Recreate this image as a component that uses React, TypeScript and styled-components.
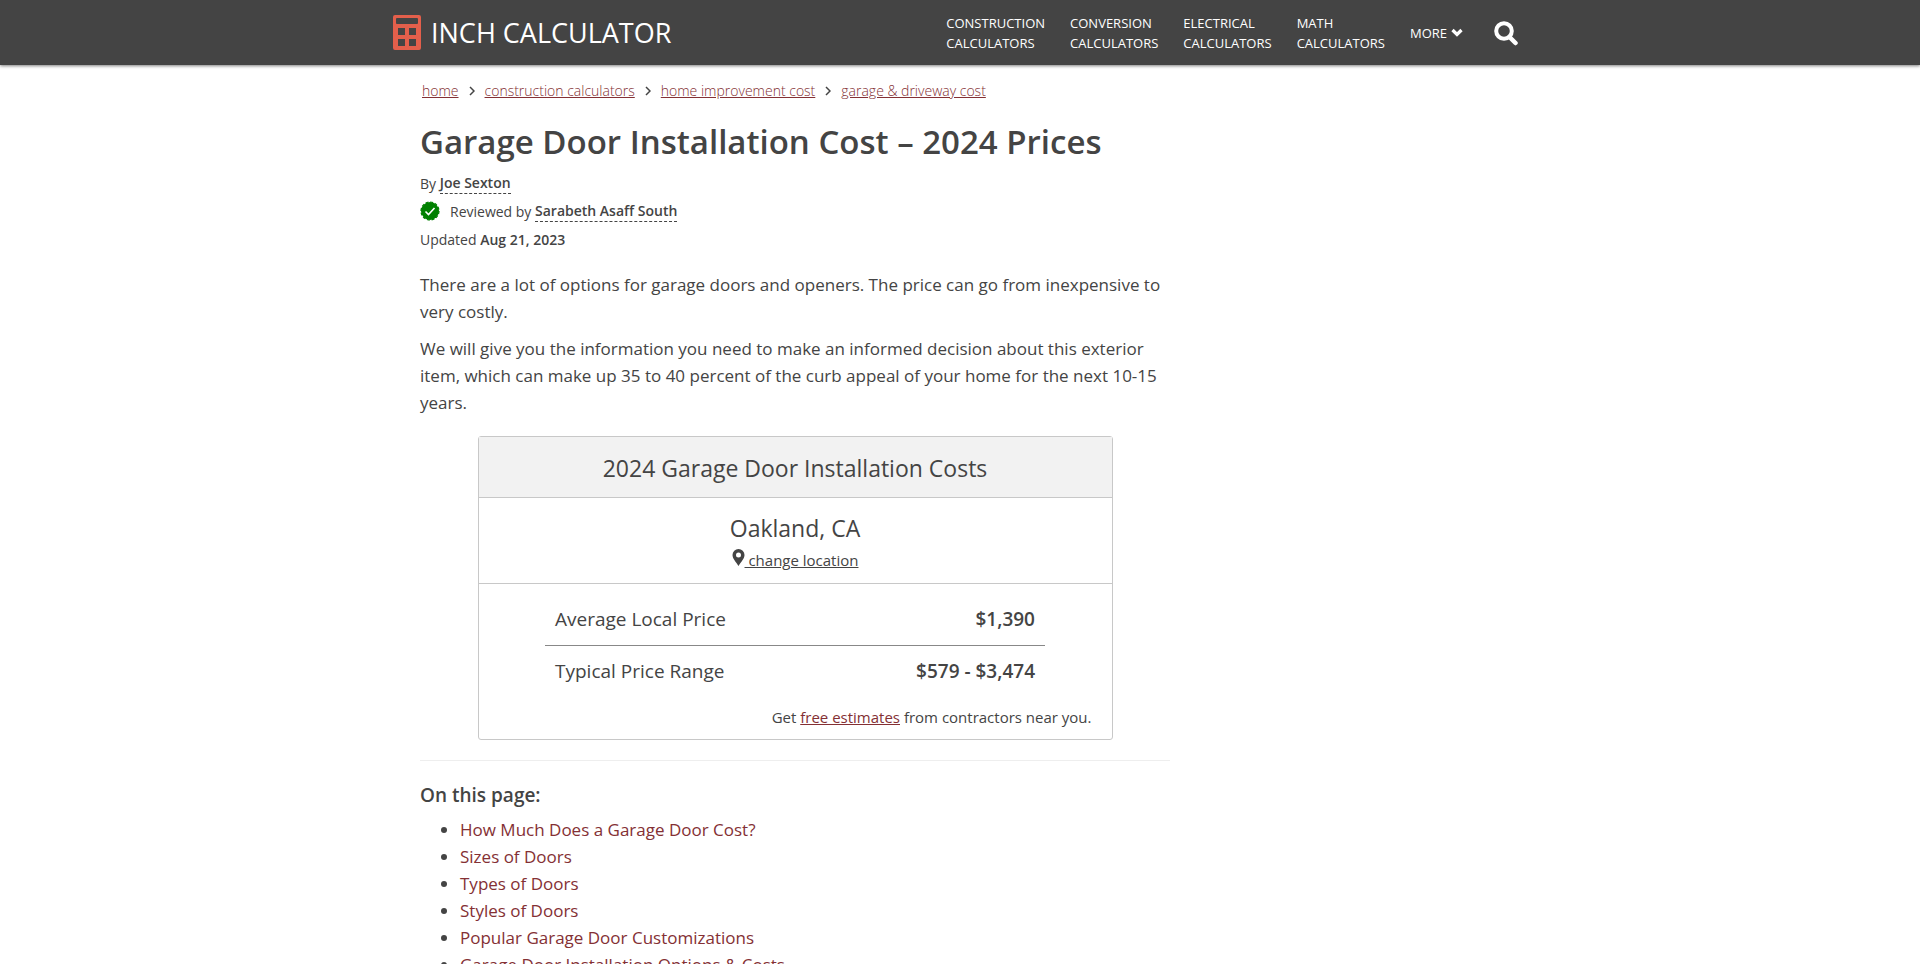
import React from 'react';
import styled, { createGlobalStyle } from 'styled-components';

const GlobalStyle = createGlobalStyle`
  *, *::before, *::after { box-sizing: border-box; }
  html, body { margin: 0; height: 100%; overflow: hidden; }
  body {
    background: #fff;
    color: #444;
    font-family: 'Segoe UI', 'Open Sans', sans-serif;
    font-size: 17px;
    line-height: 27px;
  }
  a { color: #843034; }
`;

const Header = styled.header`
  background: #444;
  box-shadow: 0 1px 3px rgba(0, 0, 0, 0.5);
`;

const HeaderInner = styled.div`
  display: flex;
  align-items: center;
  justify-content: space-between;
  max-width: 1134px;
  height: 65px;
  margin: 0 auto;
  padding-right: 9px;
`;

const Brand = styled.a`
  display: flex;
  align-items: center;
  gap: 10px;
  color: #fff;
  font-size: 27px;
  line-height: 36px;
  text-decoration: none;
`;

const Nav = styled.nav`
  display: flex;
  align-items: center;
  gap: 25px;
`;

const NavLink = styled.a`
  color: #fff;
  font-size: 13px;
  line-height: 20px;
  text-decoration: none;
  text-transform: uppercase;
`;

const NavButton = styled.button`
  display: flex;
  align-items: center;
  gap: 4px;
  padding: 0;
  border: 0;
  background: none;
  color: #fff;
  font: inherit;
  font-size: 13px;
  line-height: 20px;
  cursor: pointer;
`;

const SearchButton = styled(NavButton)`
  margin-left: 6px;
`;

const Content = styled.div`
  max-width: 1080px;
  margin: 0 auto;
`;

const Article = styled.main`
  max-width: 750px;
`;

const Breadcrumbs = styled.nav`
  display: flex;
  align-items: center;
  gap: 10px;
  padding: 15px 2px 0;
  font-size: 14px;
  line-height: 22px;
  font-weight: 300;
`;

const Title = styled.h1`
  margin: 16px 0 3px;
  font-size: 33px;
  line-height: 48px;
  font-weight: 600;
`;

const Meta = styled.div`
  display: flex;
  align-items: center;
  height: 28px;
  font-size: 14px;
  white-space: pre;
  & strong { font-weight: 600; }
`;

const Person = styled.a`
  && { color: #444; }
  border-bottom: 1px dashed #444;
  font-weight: 600;
  line-height: 20px;
  text-decoration: none;
`;

const CheckBadge = styled.svg`
  margin-right: 10px;
`;

const Intro = styled.div`
  padding-top: 18px;
`;

const Paragraph = styled.p`
  margin: 0 0 10px;
`;

const Card = styled.section`
  max-width: 635px;
  margin: 20px auto 0;
  border: 1px solid #c8c8c8;
  border-radius: 3px;
`;

const CardTitle = styled.h2`
  margin: 0;
  padding: 15px 16px 13px;
  border-bottom: 1px solid #c8c8c8;
  background: #f2f2f2;
  font-size: 23px;
  line-height: 32px;
  font-weight: 400;
  text-align: center;
`;

const Location = styled.div`
  padding: 12px 16px 8px;
  border-bottom: 1px solid #c8c8c8;
  text-align: center;
`;

const City = styled.div`
  font-size: 23px;
  line-height: 36px;
`;

const ChangeLink = styled.a`
  && { color: #444; }
  font-size: 15px;
  line-height: 29px;
`;

const PriceTable = styled.table`
  width: 500px;
  max-width: 100%;
  margin: 10px auto 0;
  border-collapse: collapse;
  font-size: 19px;

  & th, & td { padding: 12px 10px; }
  & th { font-weight: 400; text-align: left; }
  & td { font-weight: 600; text-align: right; }
  & tr + tr > * { border-top: 1px solid #888; }
`;

const CardNote = styled.p`
  margin: 7px 20px 8px;
  font-size: 15px;
  text-align: right;
`;

const Divider = styled.hr`
  margin: 20px 0;
  border: 0;
  border-top: 1px solid #eee;
`;

const ContentsTitle = styled.h2`
  margin: 0 0 7px;
  font-size: 19px;
  line-height: 28px;
  font-weight: 600;
`;

const Contents = styled.ul`
  margin: 0;
  padding-left: 40px;
  & a { text-decoration: none; }
`;

const topics = ['Construction', 'Conversion', 'Electrical', 'Math'];
const crumbs = ['home', 'construction calculators', 'home improvement cost', 'garage & driveway cost'];
const sections = [
  'How Much Does a Garage Door Cost?',
  'Sizes of Doors',
  'Types of Doors',
  'Styles of Doors',
  'Popular Garage Door Customizations',
  'Garage Door Installation Options & Costs',
];

const CalculatorIcon = () => (
  <svg width="28" height="35" viewBox="0 0 28 35" aria-hidden="true">
    <path
      fill="#e35f4b"
      fillRule="evenodd"
      d="M2 0h24a2 2 0 0 1 2 2v31a2 2 0 0 1-2 2H2a2 2 0 0 1-2-2V2a2 2 0 0 1 2-2zM4 3a1 1 0 0 0-1 1v4a1 1 0 0 0 1 1h20a1 1 0 0 0 1-1V4a1 1 0 0 0-1-1zM5 13v7h7v-7zM16 13v7h7v-7zM5 24v7h7v-7zM16 24v7h7v-7z"
    />
  </svg>
);

export default function App() {
  return (
    <>
      <GlobalStyle />
      <Header>
        <HeaderInner>
          <Brand href="#">
            <CalculatorIcon />
            INCH CALCULATOR
          </Brand>
          <Nav aria-label="Main">
            {topics.map((topic) => (
              <NavLink href="#" key={topic}>
                {topic}
                <br />
                Calculators
              </NavLink>
            ))}
            <NavButton type="button">
              MORE
              <svg width="12" height="10" viewBox="0 0 12 10" aria-hidden="true">
                <path d="M1.500 2l4.500 4.500 4.500-4.500" fill="none" stroke="#fff" strokeWidth="3.200" />
              </svg>
            </NavButton>
            <SearchButton type="button" aria-label="Search">
              <svg width="24" height="26" viewBox="0 0 24 26" aria-hidden="true">
                <circle cx="10" cy="11" r="7.800" fill="none" stroke="#fff" strokeWidth="4" />
                <path d="M15.500 17l6 6" stroke="#fff" strokeWidth="4.500" strokeLinecap="round" />
              </svg>
            </SearchButton>
          </Nav>
        </HeaderInner>
      </Header>
      <Content>
        <Article>
          <Breadcrumbs aria-label="Breadcrumb">
            {crumbs.map((crumb, i) => (
              <React.Fragment key={crumb}>
                {i > 0 && (
                  <svg width="6" height="10" viewBox="0 0 6 10" aria-hidden="true">
                    <path d="M1 1l4 4-4 4" fill="none" stroke="#444" strokeWidth="1.500" />
                  </svg>
                )}
                <a href="#">{crumb}</a>
              </React.Fragment>
            ))}
          </Breadcrumbs>
          <Title>Garage Door Installation Cost – 2024 Prices</Title>
          <Meta>
            By <Person href="#">Joe Sexton</Person>
          </Meta>
          <Meta>
            <CheckBadge width="20" height="20" viewBox="0 0 20 20" aria-hidden="true">
              <circle cx="10" cy="10" r="9" fill="#008000" stroke="#008000" strokeWidth="1.200" strokeDasharray="3 1.700" />
              <path d="M5.500 10.500l3 3 6-6.500" fill="none" stroke="#fff" strokeWidth="1.600" />
            </CheckBadge>
            Reviewed by <Person href="#">Sarabeth Asaff South</Person>
          </Meta>
          <Meta>
            Updated <strong>Aug 21, 2023</strong>
          </Meta>
          <Intro>
            <Paragraph>
              There are a lot of options for garage doors and openers. The price can go from inexpensive to very costly.
            </Paragraph>
            <Paragraph>
              We will give you the information you need to make an informed decision about this exterior item, which can
              make up 35 to 40 percent of the curb appeal of your home for the next 10-15 years.
            </Paragraph>
          </Intro>
          <Card>
            <CardTitle>2024 Garage Door Installation Costs</CardTitle>
            <Location>
              <City>Oakland, CA</City>
              <ChangeLink href="#">
                <svg width="13" height="17" viewBox="0 0 13 17" aria-hidden="true">
                  <path
                    fill="#444"
                    fillRule="evenodd"
                    d="M6.500 0a6 6 0 0 1 6 6c0 3.500-3.500 7-6 11-2.500-4-6-7.500-6-11a6 6 0 0 1 6-6zm0 3.500a2.500 2.500 0 1 0 0 5 2.500 2.500 0 0 0 0-5z"
                  />
                </svg>
                {' change location'}
              </ChangeLink>
            </Location>
            <PriceTable>
              <tbody>
                <tr>
                  <th scope="row">Average Local Price</th>
                  <td>$1,390</td>
                </tr>
                <tr>
                  <th scope="row">Typical Price Range</th>
                  <td>$579 - $3,474</td>
                </tr>
              </tbody>
            </PriceTable>
            <CardNote>
              Get <a href="#">free estimates</a> from contractors near you.
            </CardNote>
          </Card>
          <Divider />
          <ContentsTitle>On this page:</ContentsTitle>
          <Contents>
            {sections.map((section) => (
              <li key={section}>
                <a href="#">{section}</a>
              </li>
            ))}
          </Contents>
        </Article>
      </Content>
    </>
  );
}
